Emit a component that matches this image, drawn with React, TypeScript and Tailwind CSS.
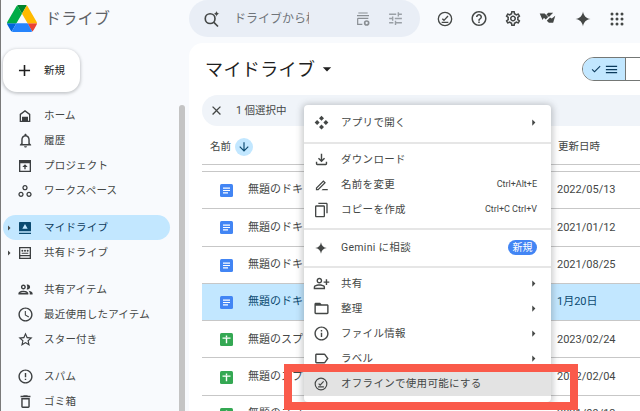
import React from "react";
import {
  MdAdd, MdArrowDownward, MdArrowDropDown, MdArrowRight, MdCheck, MdClose, MdMenu, MdTune,
  MdOutlineNotifications, MdOutlineWorkspaces, MdOutlinePeople, MdOutlineSchedule, MdStarBorder,
  MdErrorOutline, MdOutlineDelete, MdOutlineHelpOutline, MdOutlineSettings, MdOutlineFileDownload,
  MdOutlineContentCopy, MdOutlinePersonAddAlt, MdOutlineFolderOpen, MdOutlineInfo, MdOutlineLabel,
} from "react-icons/md";

const font = { fontFamily: 'Roboto, "Noto Sans CJK JP", sans-serif' };

function Svg({ size = 16, className = "", children }: { size?: number; className?: string; children: React.ReactNode }) {
  return (
    <svg width={size} height={size} viewBox="0 0 24 24" className={className} fill="currentColor">
      {children}
    </svg>
  );
}

const Logo = () => (
  <svg width="30" height="27" viewBox="0 0 87.3 78">
    <path d="m6.6 66.85 3.85 6.65c.8 1.4 1.95 2.5 3.3 3.3l13.75-23.8h-27.5c0 1.55.4 3.1 1.2 4.5z" fill="#0066da" />
    <path d="m43.65 25-13.75-23.8c-1.35.8-2.5 1.9-3.3 3.3l-25.4 44a9.06 9.06 0 0 0 -1.2 4.5h27.5z" fill="#00ac47" />
    <path d="m73.55 76.8c1.35-.8 2.5-1.9 3.3-3.3l1.6-2.75 7.65-13.25c.8-1.4 1.2-2.95 1.2-4.5h-27.502l5.852 11.5z" fill="#ea4335" />
    <path d="m43.65 25 13.75-23.8c-1.35-.8-2.9-1.2-4.5-1.2h-18.5c-1.6 0-3.15.45-4.5 1.2z" fill="#00832d" />
    <path d="m59.8 53h-32.3l-13.75 23.8c1.35.8 2.9 1.2 4.5 1.2h50.8c1.6 0 3.15-.45 4.5-1.2z" fill="#2684fc" />
    <path d="m73.4 26.5-12.7-22c-.8-1.4-1.95-2.5-3.3-3.3l-13.75 23.8 16.15 28h27.45c0-1.55-.4-3.1-1.2-4.5z" fill="#ffba00" />
  </svg>
);

const Star = ({ size = 16, className = "" }: { size?: number; className?: string }) => (
  <Svg size={size} className={className}>
    <path d="M12 2c.7 5.6 4.4 9.3 10 10-5.6.7-9.3 4.4-10 10-.7-5.6-4.4-9.3-10-10 5.6-.7 9.3-4.4 10-10z" />
  </Svg>
);

const OfflineIcon = ({ size = 18, className = "" }: { size?: number; className?: string }) => (
  <svg width={size} height={size} viewBox="0 0 24 24" className={className} fill="none" stroke="currentColor" strokeWidth="2">
    <circle cx="12" cy="12" r="10" />
    <path d="M8 11.500l2.500 2.500L16.500 7.500M7 17h10" />
  </svg>
);

const HomeIcon = () => (
  <Svg>
    <path d="M12 3 4 9v12h16V9l-8-6zm6 16h-1.500v-6h-9v6H6v-9l6-4.500 6 4.500v9z" />
  </Svg>
);
const ProjectIcon = () => (
  <Svg>
    <path d="M3 3h18v18H3V3zm2 5v11h14V8H5zm7 1.500 4 4h-3V17h-2v-3.500H8l4-4z" />
  </Svg>
);
const MyDriveIcon = () => (
  <Svg>
    <path d="M4 3h16a1 1 0 0 1 1 1v13H3V4a1 1 0 0 1 1-1zm8 3-4 7h8l-4-7zM3 19h18v2H3z" />
  </Svg>
);
const SharedDriveIcon = () => (
  <Svg>
    <path d="M3 3h18v18H3V3zm2 2v10h14V5H5zm0 12v2h14v-2H5zM8 7a1.500 1.500 0 1 1 0 3 1.500 1.500 0 0 1 0-3zm8 0a1.500 1.500 0 1 1 0 3 1.500 1.500 0 0 1 0-3zm-4 0a1.500 1.500 0 1 1 0 3 1.500 1.500 0 0 1 0-3zm-5 4.500h10V13H7z" />
  </Svg>
);
const AddonIcon = () => (
  <Svg size={17}>
    <path d="M1 5h7l5 5-3.500 3.500L7 11l-2 3-4-9zM13 4h7l-6 6-3.500-3.500L13 4zM23 8l-3 10h-6l-3-3 4.500-4.500L18 12l5-4z" />
  </Svg>
);
const SearchSpark = () => (
  <svg width="18" height="18" viewBox="0 0 24 24" fill="none" stroke="#444746" strokeWidth="2.200">
    <circle cx="9.500" cy="11.500" r="6.500" />
    <path d="M14.500 16.500l5.500 5.500" />
    <path d="M18 1c.3 2.500 1.500 3.700 4 4-2.500.3-3.700 1.500-4 4-.3-2.500-1.500-3.700-4-4 2.500-.3 3.700-1.500 4-4z" fill="#444746" stroke="none" />
  </svg>
);
const FilterGear = () => (
  <svg width="16" height="16" viewBox="0 0 24 24" fill="none" stroke="#8a8f94" strokeWidth="1.800">
    <path d="M5 3h14M3 7h18M4 11v9h7M4 11h16" />
    <circle cx="17.500" cy="18" r="3" strokeWidth="2.500" />
  </svg>
);
const MoveIcon = () => (
  <Svg size={15}>
    <path d="M12 1l4 4-4 4-4-4 4-4zM5 8l4 4-4 4-4-4 4-4zM19 8l4 4-4 4-4-4 4-4zM12 15l4 4-4 4-4-4 4-4z" />
  </Svg>
);
const RenameIcon = () => (
  <Svg size={15}>
    <path d="M3 21v-4L15 5l4 4L7 21H3zm2-2h1.200L16.200 9 15 7.800 5 17.800V19zM12 21h10v-2H14l-2 2z" />
  </Svg>
);

const DocIcon = () => (
  <svg width="13" height="13" viewBox="0 0 13 13" className="shrink-0">
    <rect width="13" height="13" rx="1.500" fill="#4285f4" />
    <path d="M3 3.500h7v1.200H3zM3 5.900h7v1.200H3zM3 8.300h5v1.200H3z" fill="#fff" />
  </svg>
);
const SheetIcon = () => (
  <svg width="13" height="13" viewBox="0 0 13 13" className="shrink-0">
    <rect width="13" height="13" rx="1.500" fill="#34a853" />
    <path d="M2.500 4.500h8v1.300H7.200v4.500H5.800V5.800H2.500z" fill="#fff" />
    <path d="M5.800 2.500h1.400v2H5.800z" fill="#fff" />
  </svg>
);

function NavItem({ icon, label, active, caret }: { icon: React.ReactNode; label: string; active?: boolean; caret?: boolean }) {
  return (
    <div className={`relative flex h-[25px] w-[167px] items-center rounded-full pl-[14px] text-[10.500px] ${active ? "bg-[#c2e7ff] text-[#0b3a5c]" : "text-[#444746]"}`}>
      {caret && <MdArrowRight size={12} className="absolute left-[0px] text-[#444746]" />}
      <span className={`flex w-[27px] shrink-0 items-center ${active ? "text-[#0b4a70]" : "text-[#3c3f41]"}`}>{icon}</span>
      <span className="whitespace-nowrap tracking-[0.2px]">{label}</span>
    </div>
  );
}

function Row({ icon, name, date, selected }: { icon: React.ReactNode; name: string; date: string; selected?: boolean }) {
  return (
    <div className={`flex h-[37.300px] shrink-0 items-center border-t border-[#c7c7c7] pl-[18px] pt-[1px] text-[11px] ${selected ? "bg-[#c2e7ff] text-[#0b4a70]" : "text-[#444746]"}`}>
      {icon}
      <span className="ml-[15px] w-[55px] shrink-0 overflow-hidden whitespace-nowrap">{name}</span>
      <span className="ml-[254px] whitespace-nowrap">{date}</span>
    </div>
  );
}

function MenuItem({ icon, label, right, arrow, hover }: { icon: React.ReactNode; label: string; right?: React.ReactNode; arrow?: boolean; hover?: boolean }) {
  return (
    <div className={`flex h-[25px] items-center pl-[3px] pr-[14px] text-[10.500px] text-[#444746] ${hover ? "bg-[#e3e3e3]" : ""}`}>
      <span className="flex w-[28px] shrink-0 justify-center text-[#444746]">{icon}</span>
      <span className="ml-[6px] whitespace-nowrap tracking-[0.3px]">{label}</span>
      <span className="ml-auto flex items-center">
        {right}
        {arrow && <MdArrowRight size={15} className="-mr-[4px]" />}
      </span>
    </div>
  );
}

function MdAppsDots() {
  return (
    <svg width="14" height="14" viewBox="0 0 14 14" fill="#444746">
      {[2, 7, 12].flatMap((y) =>
        [2, 7, 12].map((x) => <circle key={`${x}-${y}`} cx={x} cy={y} r="1.500" />)
      )}
    </svg>
  );
}

export default function App() {
  return (
    <div style={font} className="relative flex h-[411px] w-[640px] flex-col overflow-hidden border-l border-[#7a7a7a] bg-[#f8fafd]">
      {/* top bar */}
      <header className="flex h-[43px] shrink-0 items-center">
        <div className="ml-[6px] flex w-[182px] items-center pb-[6px]">
          <Logo />
          <span className="ml-[8px] text-[16px] tracking-[0.3px] text-[#5f6368]">ドライブ</span>
        </div>
        <div className="flex h-[37px] w-[231px] -translate-y-[3px] items-center rounded-[20px] bg-[#e9eef6] pl-[14px]">
          <SearchSpark />
          <span className="ml-[13px] w-[75px] overflow-hidden whitespace-nowrap text-[12px] text-[#70757a]">ドライブから検索</span>
          <span className="ml-[46px]"><FilterGear /></span>
          <MdTune size={17} className="ml-[16px] text-[#9aa0a6]" />
        </div>
        <div className="flex -translate-y-[3px] items-center text-[#444746]">
          <span className="ml-[16px] flex w-[18px] justify-center"><OfflineIcon size={16} /></span>
          <span className="ml-[16px] flex w-[18px] justify-center"><MdOutlineHelpOutline size={19} /></span>
          <span className="ml-[16px] flex w-[18px] justify-center"><MdOutlineSettings size={19} /></span>
          <span className="ml-[16px] flex w-[18px] justify-center"><AddonIcon /></span>
          <span className="ml-[18px] flex w-[18px] justify-center"><Star size={18} /></span>
          <span className="ml-[16px] flex w-[18px] justify-center"><MdAppsDots /></span>
        </div>
      </header>

      <div className="flex min-h-0 flex-1">
        {/* sidebar */}
        <aside className="relative w-[188px] shrink-0 pl-[2px]">
          <div className="mt-[6px] flex h-[43px] w-[77px] items-center rounded-[14px] bg-white pl-[12px] text-[10.500px] text-[#1f1f1f] shadow-[0_1px_3px_1px_rgba(60,64,67,0.25)]">
            <MdAdd size={19} className="text-[#1f1f1f]" />
            <span className="ml-[10px]">新規</span>
          </div>
          <div className="mt-[11px]">
            <NavItem icon={<HomeIcon />} label="ホーム" />
            <NavItem icon={<MdOutlineNotifications size={17} />} label="履歴" />
            <NavItem icon={<ProjectIcon />} label="プロジェクト" />
            <NavItem icon={<MdOutlineWorkspaces size={16} />} label="ワークスペース" />
          </div>
          <div className="mt-[12px]">
            <NavItem icon={<MyDriveIcon />} label="マイドライブ" active caret />
            <NavItem icon={<SharedDriveIcon />} label="共有ドライブ" caret />
          </div>
          <div className="mt-[12px]">
            <NavItem icon={<MdOutlinePeople size={17} />} label="共有アイテム" />
            <NavItem icon={<MdOutlineSchedule size={17} />} label="最近使用したアイテム" />
            <NavItem icon={<MdStarBorder size={17} />} label="スター付き" />
          </div>
          <div className="mt-[12px]">
            <NavItem icon={<MdErrorOutline size={17} />} label="スパム" />
            <NavItem icon={<MdOutlineDelete size={17} />} label="ゴミ箱" />
          </div>
          <div className="absolute right-[4px] top-[62px] h-[320px] w-[6px] rounded-full bg-[#c4c4c4]" />
        </aside>

        {/* main */}
        <main className="flex min-w-0 flex-1 flex-col rounded-tl-[14px] bg-white pl-[13px]">
          <div className="flex h-[52px] shrink-0 items-center">
            <span className="ml-[3px] shrink-0 whitespace-nowrap text-[18px] tracking-[0.4px] text-[#1f1f1f]">マイドライブ</span>
            <MdArrowDropDown size={20} className="ml-[2px] shrink-0 text-[#1f1f1f]" />
            <div className="ml-[245px] flex h-[24px] w-[60px] shrink-0 overflow-hidden rounded-l-full border border-[#747775]">
              <div className="flex w-[42px] items-center justify-center bg-[#c2e7ff] text-[#0b3a5c]">
                <MdCheck size={12} />
                <MdMenu size={15} className="ml-[2px]" />
              </div>
              <div className="flex flex-1 items-center justify-center border-l border-[#747775] bg-white" />
            </div>
          </div>
          <div className="flex h-[31px] w-[460px] shrink-0 items-center rounded-full bg-[#f0f4f9] pl-[7px] text-[10.500px] text-[#444746]">
            <MdClose size={15} />
            <span className="ml-[12px] whitespace-nowrap">1 個選択中</span>
          </div>
          <div className="flex h-[39px] shrink-0 items-center border-b border-[#c7c7c7] pl-[8px] pt-[3px] text-[10.500px] text-[#444746]">
            <span>名前</span>
            <span className="ml-[4px] flex h-[18px] w-[18px] items-center justify-center rounded-full bg-[#c2e7ff] text-[#0b4a70]">
              <MdArrowDownward size={14} />
            </span>
            <span className="ml-[305px] whitespace-nowrap">更新日時</span>
          </div>
          <div className="h-[6px] shrink-0" />
          <Row icon={<DocIcon />} name="無題のドキュメント" date="2022/05/13" />
          <Row icon={<DocIcon />} name="無題のドキュメント" date="2021/01/12" />
          <Row icon={<DocIcon />} name="無題のドキュメント" date="2021/08/25" />
          <Row icon={<DocIcon />} name="無題のドキュメント" date="1月20日" selected />
          <Row icon={<SheetIcon />} name="無題のスプレッドシート" date="2023/02/24" />
          <Row icon={<SheetIcon />} name="無題のスプレッドシート" date="2022/02/04" />
          <Row icon={<SheetIcon />} name="無題のスプレッドシート" date="2021/09/13" />
        </main>
      </div>

      {/* context menu */}
      <div className="absolute left-[303px] top-[105px] w-[247px] rounded-[4px] bg-white pt-[5px] shadow-[0_1px_6px_2px_rgba(60,64,67,0.28)]">
        <MenuItem icon={<MoveIcon />} label="アプリで開く" arrow />
        <div className="mb-[3px] mt-[7px] h-[2px] bg-[#e6e6e6]" />
        <MenuItem icon={<MdOutlineFileDownload size={17} />} label="ダウンロード" />
        <MenuItem icon={<RenameIcon />} label="名前を変更" right={<span className="text-[9px]">Ctrl+Alt+E</span>} />
        <MenuItem icon={<MdOutlineContentCopy size={16} className="-scale-x-100" />} label="コピーを作成" right={<span className="text-[9px]">Ctrl+C Ctrl+V</span>} />
        <div className="mb-[5px] mt-[6px] h-[2px] bg-[#e6e6e6]" />
        <MenuItem
          icon={<Star size={14} />}
          label="Gemini に相談"
          right={<span className="flex h-[15px] w-[29px] items-center justify-center rounded-full bg-[#4285f4] text-[10px] text-white">新規</span>}
        />
        <div className="mb-[3px] mt-[6px] h-[2px] bg-[#e6e6e6]" />
        <MenuItem icon={<MdOutlinePersonAddAlt size={17} />} label="共有" arrow />
        <MenuItem icon={<MdOutlineFolderOpen size={17} />} label="整理" arrow />
        <MenuItem icon={<MdOutlineInfo size={17} />} label="ファイル情報" arrow />
        <MenuItem icon={<MdOutlineLabel size={17} />} label="ラベル" arrow />
        <MenuItem icon={<OfflineIcon size={14} />} label="オフラインで使用可能にする" hover />
        <div className="h-[6px]" />
      </div>

      {/* red annotation */}
      <div className="pointer-events-none absolute left-[283px] top-[364px] h-[46px] w-[294px] border-[8px] border-[#fa5a4a]" />
    </div>
  );
}
